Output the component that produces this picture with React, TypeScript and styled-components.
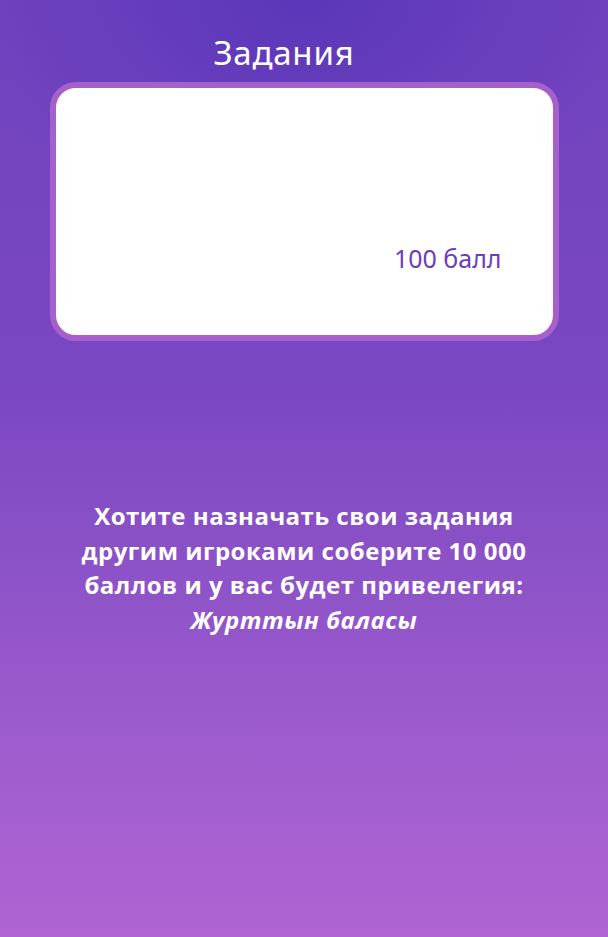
import React from 'react';
import styled, { createGlobalStyle } from 'styled-components';

const GlobalStyle = createGlobalStyle`
  html, body {
    margin: 0;
    padding: 0;
    height: 100%;
  }
  body {
    font-family: 'Open Sans', 'Noto Sans', sans-serif;
  }
  #root {
    min-height: 100%;
  }
`;

const Page = styled.main`
  min-height: 937px;
  box-sizing: border-box;
  display: flex;
  flex-direction: column;
  align-items: center;
  padding-top: 30px;
  background:
    radial-gradient(ellipse 60% 25% at 50% 0%, rgba(88, 54, 184, 0.9) 0%, rgba(88, 54, 184, 0) 100%),
    linear-gradient(180deg, #7243bf 0%, #7947c1 40%, #9a5acc 75%, #b064d3 100%);
`;

const Title = styled.h1`
  margin: 0 40px 0 0;
  font-family: 'Noto Sans', sans-serif;
  font-weight: 400;
  font-size: 33px;
  line-height: 46px;
  color: #ffffff;
  letter-spacing: 0.8px;
`;

const Card = styled.section`
  box-sizing: border-box;
  width: 509px;
  height: 259px;
  margin-top: 6px;
  border: 6px solid #a75fcc;
  border-radius: 26px;
  background: #ffffff;
  display: flex;
  align-items: flex-end;
  justify-content: flex-end;
  padding: 0 51px 63px 0;
`;

const Points = styled.span`
  font-family: 'Noto Sans', sans-serif;
  font-size: 25px;
  line-height: 28px;
  color: #6a3dbf;
`;

const Notice = styled.p`
  margin: 158px 0 0;
  width: 490px;
  text-align: center;
  font-family: 'Open Sans', sans-serif;
  font-weight: 700;
  font-size: 24px;
  line-height: 34.5px;
  letter-spacing: 0.5px;
  color: #ffffff;
`;

const Privilege = styled.em`
  font-style: italic;
`;

const App = () => {
  return (
    <>
      <GlobalStyle />
      <Page>
        <Title>Задания</Title>
        <Card>
          <Points>100 балл</Points>
        </Card>
        <Notice>
          Хотите назначать свои задания другим игроками соберите 10 000 баллов и у вас будет привелегия:
          <br />
          <Privilege>Журттын баласы</Privilege>
        </Notice>
      </Page>
    </>
  );
};

export default App;
